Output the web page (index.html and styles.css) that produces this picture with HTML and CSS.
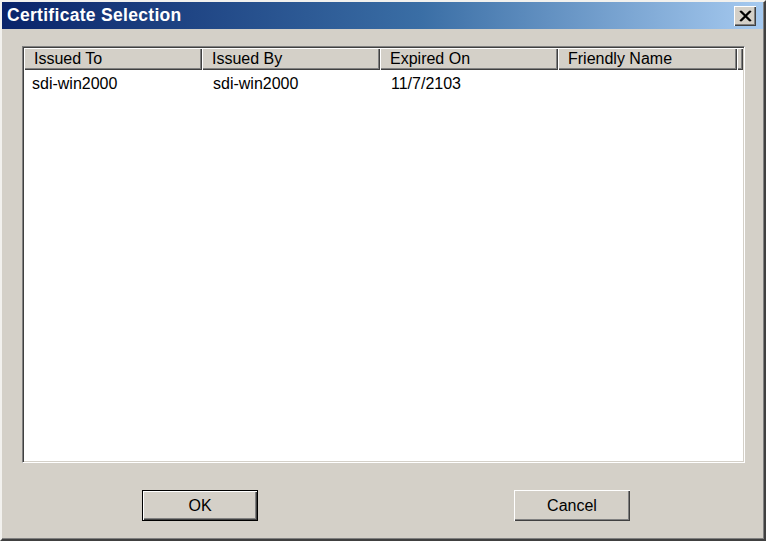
FILE: index.html
```html
<!DOCTYPE html>
<html>
<head>
<meta charset="utf-8">
<link rel="stylesheet" href="styles.css">
</head>
<body>
<div class="window">
  <div class="titlebar">
    <span class="title">Certificate Selection</span>
    <button class="close" aria-label="Close">
      <svg width="14" height="12" viewBox="0 0 14 12"><path d="M2 1 L12 11 M3 1 L13 11 M12 1 L2 11 M13 1 L3 11" stroke="#000" stroke-width="1.6" fill="none"/></svg>
    </button>
  </div>
  <div class="content">
    <div class="listview">
      <div class="header">
        <div class="hcol c1">Issued To</div>
        <div class="hcol c2">Issued By</div>
        <div class="hcol c3">Expired On</div>
        <div class="hcol c4">Friendly Name</div>
        <div class="hrest"></div>
      </div>
      <div class="row">
        <div class="cell c1 first">sdi-win2000</div>
        <div class="cell c2">sdi-win2000</div>
        <div class="cell c3">11/7/2103</div>
        <div class="cell c4"></div>
      </div>
    </div>
    <div class="buttons">
      <button class="btn default">OK</button>
      <button class="btn">Cancel</button>
    </div>
  </div>
</div>
</body>
</html>
```
FILE: styles.css
```css
html, body {
  margin: 0;
  padding: 0;
  background: #d4d0c8;
}
body {
  width: 766px;
  height: 541px;
  overflow: hidden;
  font-family: "Liberation Sans", Arial, sans-serif;
}
.window {
  box-sizing: border-box;
  width: 766px;
  height: 541px;
  background: #d4d0c8;
  border-top: 2px solid #f2f1ee;
  border-left: 2px solid #f2f1ee;
  border-right: 2px solid #404040;
  border-bottom: 2px solid #404040;
  box-shadow: inset -1px -1px 0 #808080;
  display: flex;
  flex-direction: column;
}
.titlebar {
  height: 27px;
  margin: 0 1px 0 0;
  background: linear-gradient(to right, #0a246a 0%, #3a6ea5 55%, #a6caf0 100%);
  display: flex;
  align-items: center;
  justify-content: space-between;
  padding: 0 7px 0 5px;
}
.title {
  color: #fff;
  font-weight: bold;
  font-size: 17.5px;
  letter-spacing: 0.3px;
}
.close {
  width: 22px;
  height: 20px;
  padding: 0;
  margin: 0;
  background: #d4d0c8;
  border: none;
  box-shadow: inset 1px 1px 0 #fff, inset -1px -1px 0 #404040, inset -2px -2px 0 #808080;
  display: flex;
  align-items: center;
  justify-content: center;
}
.content {
  flex: 1;
  padding: 17px 19px 0 20px;
  display: flex;
  flex-direction: column;
}
.listview {
  height: 417px;
  background: #fff;
  border-top: 1px solid #808080;
  border-left: 1px solid #808080;
  border-right: 1px solid #fff;
  border-bottom: 1px solid #fff;
  box-shadow: inset 1px 1px 0 #404040, inset -1px -1px 0 #d4d0c8;
  padding: 1px 0 0 1px;
  box-sizing: border-box;
}
.header {
  display: flex;
  height: 22px;
}
.hcol, .hrest {
  box-sizing: border-box;
  background: #d4d0c8;
  box-shadow: inset 1px 1px 0 #fff, inset -1px -1px 0 #404040, inset -2px -2px 0 #808080;
  font-size: 16px;
  line-height: 18px;
  color: #000;
  padding: 2px 0 0 10px;
  white-space: nowrap;
}
.hrest {
  flex: 1;
  margin-right: 1px;
  padding: 0;
}
.c1 { width: 178px; }
.c2 { width: 178px; }
.c3 { width: 178px; }
.c4 { width: 179px; }
.row {
  display: flex;
  height: 24px;
  align-items: center;
}
.cell {
  box-sizing: border-box;
  font-size: 16px;
  color: #000;
  padding: 3px 0 0 11px;
  white-space: nowrap;
}
.cell.first {
  padding-left: 8px;
}
.buttons {
  display: flex;
  justify-content: space-between;
  padding: 27px 115px 0 120px;
}
.btn {
  box-sizing: border-box;
  width: 116px;
  height: 31px;
  background: #d4d0c8;
  border: none;
  font-family: "Liberation Sans", Arial, sans-serif;
  font-size: 16px;
  color: #000;
  box-shadow: inset 1px 1px 0 #fff, inset -1px -1px 0 #404040, inset -2px -2px 0 #808080;
  padding: 0;
}
.btn.default {
  border: 1px solid #000;
  box-shadow: inset 1px 1px 0 #fff, inset -1px -1px 0 #404040, inset -2px -2px 0 #808080;
}
```
